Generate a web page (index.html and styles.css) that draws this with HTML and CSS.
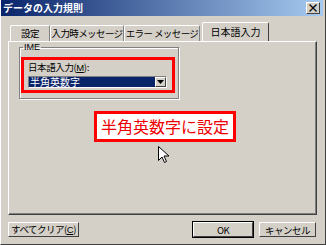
FILE: index.html
```html
<!DOCTYPE html>
<html lang="ja">

<head>
    <meta charset="UTF-8">
    <title>データの入力規則</title>
    <link rel="stylesheet" href="styles.css">
</head>

<body>
    <div class="dialog">
        <div class="titlebar">
            <span class="title">データの入力規則</span>
            <span class="close">×</span>
        </div>

        <div class="tabs">
            <div class="tab t1">設定</div>
            <div class="tab t2">入力時メッセージ</div>
            <div class="tab t3">エラー メッセージ</div>
            <div class="tab active">日本語入力</div>
        </div>

        <div class="panel">
            <fieldset class="group">
                <legend>IME</legend>
                <div class="mark">
                    <div class="label">日本語入力(<u>M</u>):</div>
                    <div class="select">
                        <span class="value">半角英数字</span>
                        <span class="arrow">
                            <svg width="7" height="4" viewBox="0 0 7 4"><path d="M0 0h7L3.5 4z" fill="#000"/></svg>
                        </span>
                    </div>
                </div>
            </fieldset>

            <div class="note">半角英数字に設定</div>

            <!-- mouse pointer over the panel -->
            <svg class="pointer" width="11" height="17" viewBox="0 0 11 17">
                <path d="M0.5 0.5v14l3.5-3.5 2.5 5.5 2-1-2.5-5.5h5z" fill="#fff" stroke="#000" stroke-width="1"/>
            </svg>
        </div>

        <div class="footer">
            <button class="btn clear">すべてクリア(<u>C</u>)</button>
            <div class="right">
                <button class="btn ok">OK</button>
                <button class="btn cancel">キャンセル</button>
            </div>
        </div>
    </div>
</body>

</html>
```

FILE: styles.css
```css
body {
    margin: 0;
    font-family: "Noto Sans CJK JP", "DejaVu Sans", sans-serif;
    font-size: 10px;
    color: #000;
    white-space: nowrap;
}

.dialog {
    width: 326px;
    height: 245px;
    box-sizing: border-box;
    background-color: #d4d0c8;
    border-left: 1px solid #ffffff;
    border-right: 1px solid #404040;
    border-bottom: 1px solid #404040;
    display: flex;
    flex-direction: column;
}

.titlebar {
    height: 16px;
    margin-right: 2px;
    background: linear-gradient(to right, #0a246a, #a6caf0);
    display: flex;
    align-items: center;
    justify-content: space-between;
    padding: 0 3px 0 2px;
}

.title {
    color: #fff;
    font-weight: bold;
    font-size: 10px;
    line-height: 16px;
}

.close {
    width: 14px;
    height: 12px;
    box-sizing: border-box;
    background-color: #d4d0c8;
    border: 1px solid;
    border-color: #fff #404040 #404040 #fff;
    font-size: 12px;
    font-weight: bold;
    line-height: 9px;
    text-align: center;
}

.tabs {
    display: flex;
    align-items: flex-end;
    margin-top: 6px;
    padding-left: 9px;
    height: 19px;
}

.tab {
    height: 16px;
    line-height: 15px;
    box-sizing: border-box;
    border-top: 1px solid #fff;
    border-left: 1px solid #fff;
    border-right: 1px solid #808080;
    border-radius: 2px 2px 0 0;
    text-align: center;
    font-size: 9.5px;
    letter-spacing: -0.6px;
}

.t1 { width: 40px; }
.t2 { width: 74px; }
.t3 { width: 76px; }

.tab.active {
    width: 67px;
    height: 20px;
    line-height: 18px;
    margin-left: 2px;
    margin-bottom: -1px;
    background-color: #d4d0c8;
    border-right-color: #404040;
    position: relative;
    font-size: 10px;
    letter-spacing: 0;
}

.panel {
    height: 174px;
    margin: 0 8px 0 7px;
    box-sizing: border-box;
    border: 1px solid;
    border-color: #fff #404040 #404040 #fff;
    box-shadow: inset -1px -1px 0 #808080;
    padding: 1px 0 0 10px;
    position: relative;
}

.group {
    width: 160px;
    height: 56px;
    box-sizing: border-box;
    margin: 0;
    padding: 5px 0 0 1px;
    border: 1px solid #808080;
    box-shadow: 1px 1px 0 #fff, inset 1px 1px 0 #fff;
}

.group legend {
    padding: 0 1px;
    margin-left: 2px;
    font-size: 9px;
    line-height: 9px;
    font-family: "Liberation Sans", sans-serif;
}

.mark {
    width: 154px;
    height: 36px;
    box-sizing: border-box;
    border: 3px solid #f00;
    padding: 1px 0 0 4px;
}

.label {
    line-height: 13px;
    font-size: 9.5px;
    letter-spacing: -0.4px;
}

.label u,
.btn u {
    font-family: "Liberation Sans", sans-serif;
}

.select {
    width: 139px;
    height: 12px;
    margin-top: 2px;
    box-sizing: border-box;
    background-color: #fff;
    border: 1px solid;
    border-color: #808080 #fff #fff #808080;
    display: flex;
}

.value {
    flex: 1;
    background-color: #0a246a;
    color: #fff;
    line-height: 10px;
    padding-left: 1px;
}

.arrow {
    width: 11px;
    box-sizing: border-box;
    background-color: #d4d0c8;
    border: 1px solid;
    border-color: #fff #404040 #404040 #fff;
    display: flex;
    align-items: center;
    justify-content: center;
}

.note {
    width: 142px;
    height: 31px;
    margin: 12px 0 0 75px;
    box-sizing: border-box;
    border: 3px solid #f00;
    background-color: #fff;
    color: #e00;
    font-size: 16px;
    line-height: 25px;
    text-align: center;
}

.pointer {
    position: absolute;
    left: 149px;
    top: 104px;
}

.footer {
    display: flex;
    justify-content: space-between;
    margin-top: 7px;
    padding: 0 9px 0 7px;
}

.right {
    display: flex;
    gap: 6px;
}

.btn {
    height: 15px;
    padding: 0;
    box-sizing: border-box;
    background-color: #d4d0c8;
    border: 1px solid;
    border-color: #fff #404040 #404040 #fff;
    font-family: "Noto Sans CJK JP", sans-serif;
    font-size: 9.5px;
    letter-spacing: -0.5px;
    line-height: 12px;
    color: #000;
    white-space: nowrap;
}

.clear { width: 71px; }
.ok {
    width: 60px;
    outline: 1px solid #000;
}
.cancel { width: 57px; }
```
